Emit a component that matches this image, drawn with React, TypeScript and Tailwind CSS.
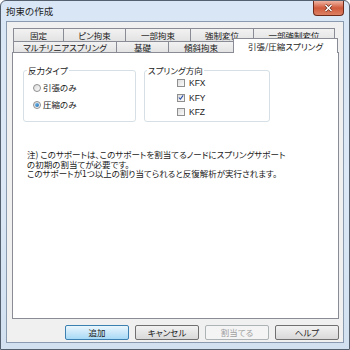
import React from 'react';

const jp = "font-['Meiryo','Noto_Sans_CJK_JP',sans-serif] [font-feature-settings:'palt']";

function Tab({ w, label, last }: { w: number; label: string; last?: boolean }) {
  return (
    <div
      style={{ width: w }}
      className={`h-full flex items-center justify-center border-t border-l border-[#898c95] bg-gradient-to-b from-[#f2f2f2] to-[#e3e3e3] text-[8.5px] text-[#1a1a1a] leading-none ${last ? 'border-r' : ''}`}
    >
      {label}
    </div>
  );
}

function Radio({ label, checked }: { label: string; checked?: boolean }) {
  return (
    <div className="flex items-center h-[17px]">
      <span className="w-[8px] h-[8px] rounded-full border border-[#8f8f8f] bg-gradient-to-br from-[#dcdcdc] to-[#fbfbfb] flex items-center justify-center">
        {checked && <span className="w-[4px] h-[4px] rounded-full bg-gradient-to-br from-[#7ec2f0] to-[#1a6cb0]" />}
      </span>
      <span className="ml-[2px] text-[8.5px] leading-none text-[#1a1a1a]">{label}</span>
    </div>
  );
}

function Check({ label, checked }: { label: string; checked?: boolean }) {
  return (
    <div className="flex items-center h-[14.5px]">
      <span className="w-[8px] h-[8px] border border-[#8f8f8f] bg-gradient-to-br from-[#dedede] to-[#fafafa] flex items-center justify-center">
        {checked && (
          <svg width="7" height="7" viewBox="0 0 7 7">
            <path d="M1 3.5 L2.8 5.5 L6 1" fill="none" stroke="#2a4fa8" strokeWidth="1.3" />
          </svg>
        )}
      </span>
      <span className="ml-[4px] text-[8.5px] leading-none text-[#1a1a1a] font-['Liberation_Sans',sans-serif]">{label}</span>
    </div>
  );
}

function Btn({ label, kind }: { label: string; kind?: 'default' | 'disabled' }) {
  const cls =
    kind === 'default'
      ? 'border-[#3c7fb1] from-[#eaf6fd] to-[#a7d9f5] text-[#1a1a1a]'
      : kind === 'disabled'
      ? 'border-[#adb2b5] from-[#f4f4f4] to-[#f4f4f4] text-[#a0a0a0]'
      : 'border-[#707070] from-[#f2f2f2] to-[#d9d9d9] text-[#1a1a1a]';
  return (
    <div
      className={`w-[64px] h-[15px] rounded-[2px] border bg-gradient-to-b flex items-center justify-center text-[8.5px] leading-none ${cls}`}
    >
      {label}
    </div>
  );
}

export default function App() {
  return (
    <div className={`w-[350px] h-[350px] ${jp}`}>
      <div className="w-full h-full flex flex-col border border-[#55606e] rounded-t-[6px] bg-gradient-to-b from-[#d9e6f5] via-[#dce8f5] to-[#d2e0f0]">
        {/* title bar */}
        <div className="h-[20px] flex items-start shrink-0">
          <span className="ml-[5px] mt-[6px] text-[9.5px] leading-none text-[#1e1e1e]">拘束の作成</span>
          <div className="ml-auto mr-[5px] w-[31px] h-[15px] rounded-b-[4px] border border-t-0 border-[#6d2a1a] bg-gradient-to-b from-[#eeb3a2] via-[#d05a3c] to-[#dc8064] flex items-center justify-center">
            <svg width="9" height="8" viewBox="0 0 9 8">
              <path d="M1.5 1 L7.5 7 M7.5 1 L1.5 7" stroke="#5a2010" strokeWidth="2.6" />
              <path d="M1.5 1 L7.5 7 M7.5 1 L1.5 7" stroke="#ffffff" strokeWidth="1.6" />
            </svg>
          </div>
        </div>

        {/* client */}
        <div className="mx-[5px] mb-[6px] flex-1 border border-[#8a9bb0] bg-[#f0f0f0] flex flex-col">
          <div className="pl-[5px] pt-[6px]">
            <div className="flex h-[13px] ml-[1px]">
              <Tab w={50} label="固定" />
              <Tab w={62} label="ピン拘束" />
              <Tab w={65} label="一部拘束" />
              <Tab w={63} label="強制変位" />
              <Tab w={82} label="一部強制変位" last />
            </div>
            <div className="flex h-[11px] ml-[1px] items-end">
              <Tab w={103} label="マルチリニアスプリング" />
              <Tab w={52} label="基礎" />
              <Tab w={65} label="傾斜拘束" />
              <div className="relative z-10 w-[105px] h-[15px] -mb-[1px] border border-b-0 border-[#898c95] bg-white flex items-start justify-center pt-[3px] text-[8.5px] leading-none text-[#1a1a1a]">
                引張/圧縮スプリング
              </div>
            </div>
            <div className="w-[327px] h-[267px] border border-[#898c95] bg-white">
              <div className="flex ml-[10px] mt-[17px]">
                <div className="relative w-[113px] h-[52px] border border-[#d5dfe5] rounded-[3px] pl-[9px] pt-[8px]">
                  <span className="absolute left-[3px] -top-[5px] bg-white px-[1px] text-[8.5px] leading-none text-[#1a1a1a]">反力タイプ</span>
                  <Radio label="引張のみ" />
                  <Radio label="圧縮のみ" checked />
                </div>
                <div className="relative ml-[8px] w-[126px] h-[52px] border border-[#d5dfe5] rounded-[3px] pl-[32px] pt-[5px]">
                  <span className="absolute left-[2px] -top-[5px] bg-white px-[1px] text-[8.5px] leading-none text-[#1a1a1a]">スプリング方向</span>
                  <Check label="KFX" />
                  <Check label="KFY" checked />
                  <Check label="KFZ" />
                </div>
              </div>
              <div className="ml-[14px] mt-[28px] text-[8.5px] leading-[9.5px] text-[#1a1a1a]">
                <div>注) このサポートは、このサポートを割当てるノードにスプリングサポート</div>
                <div>の初期の割当てが必要です。</div>
                <div>このサポートが1つ以上の割り当てられると反復解析が実行されます。</div>
              </div>
            </div>
          </div>
          <div className="flex justify-end gap-[6px] pr-[4px] mt-[6px]">
            <Btn label="追加" kind="default" />
            <Btn label="キャンセル" />
            <Btn label="割当てる" kind="disabled" />
            <Btn label="ヘルプ" />
          </div>
        </div>
      </div>
    </div>
  );
}
